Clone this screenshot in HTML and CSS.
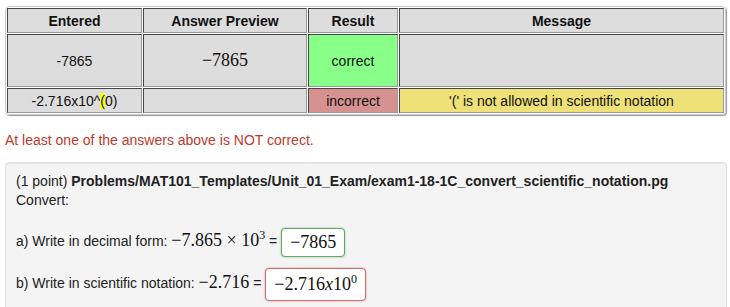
FILE: index.html
```html
<!DOCTYPE html>
<html lang="en">
<head>
    <meta charset="UTF-8">
    <title>Attempt results</title>
    <link rel="stylesheet" href="styles.css">
</head>
<body>
    <table class="results">
        <tr>
            <th class="col-entered">Entered</th>
            <th class="col-preview">Answer Preview</th>
            <th class="col-result">Result</th>
            <th>Message</th>
        </tr>
        <tr class="tall">
            <td>-7865</td>
            <td><span class="math">&minus;7865</span></td>
            <td class="correct">correct</td>
            <td></td>
        </tr>
        <tr>
            <td>-2.716x10^<span class="mark">(</span>0)</td>
            <td></td>
            <td class="incorrect">incorrect</td>
            <td class="warn">'(' is not allowed in scientific notation</td>
        </tr>
    </table>

    <p class="not-correct">At least one of the answers above is NOT correct.</p>

    <div class="well">
        <div class="problem-head">(1 point) <b>Problems/MAT101_Templates/Unit_01_Exam/exam1-18-1C_convert_scientific_notation.pg</b></div>
        <div>Convert:</div>
        <p class="part">a) Write in decimal form: <span class="math">&minus;7.865 &times; 10<sup>3</sup></span> = <span class="answer ok"><span class="math">&minus;7865</span></span></p>
        <p class="part part-b">b) Write in scientific notation: <span class="math">&minus;2.716</span> = <span class="answer bad"><span class="math">&minus;2.716<i>x</i>10<sup>0</sup></span></span></p>
    </div>
</body>
</html>
```

FILE: styles.css
```css
body {
    margin: 0;
    padding: 6px 4px 0 5px;
    font-family: "Liberation Sans", Arial, sans-serif;
    font-size: 14px;
    color: #222;
    background: #fff;
}
.results {
    width: 721px;
    border-collapse: separate;
    border-spacing: 1px;
    border: 1px solid #c8c8c8;
    border-radius: 4px;
    box-shadow: 1px 1px 1px #999;
}
.results th, .results td {
    background-color: #dddddd;
    border: 1px inset #999;
    text-align: center;
    padding: 0 5px;
    height: 23px;
    color: #111;
}
.results th {
    font-weight: bold;
}
.results tr.tall td {
    height: 51px;
}
.col-entered { width: 123px; }
.col-preview { width: 152px; }
.col-result { width: 78px; }
.results td.correct {
    background-color: #88ff88;
}
.results td.incorrect {
    background-color: #d69191;
}
.results td.warn {
    background-color: #eee177;
}
.mark {
    background-color: #ffff00;
}
.math {
    font-family: "Liberation Serif", serif;
    font-size: 18px;
    color: #111;
}
.math sup {
    font-size: 12px;
    vertical-align: 7px;
    line-height: 0;
}
.not-correct {
    color: #c0392b;
    margin: 15px 0 0 0;
    line-height: 20px;
}
.well {
    margin-top: 12px;
    width: 700px;
    min-height: 150px;
    background-color: #f4f4f4;
    border: 1px solid #e0e0e0;
    border-radius: 4px;
    box-shadow: inset 0 1px 1px rgba(0, 0, 0, 0.05);
    padding: 9px 10px;
    line-height: 19px;
}
.part {
    margin: 16px 0 0 0;
    line-height: 28px;
}
.part-b {
    margin-top: 11px;
}
.answer {
    display: inline-block;
    background: #fff;
    border: 1px solid;
    border-radius: 4px;
    padding: 0 8px;
    line-height: 26px;
    vertical-align: middle;
}
.answer.ok {
    border-color: #5cae5c;
    box-shadow: 0 0 2px rgba(70, 136, 71, 0.6);
}
.answer.bad {
    border-color: #d26d6d;
    box-shadow: 0 0 2px rgba(185, 74, 72, 0.6);
    line-height: 30px;
}
```
